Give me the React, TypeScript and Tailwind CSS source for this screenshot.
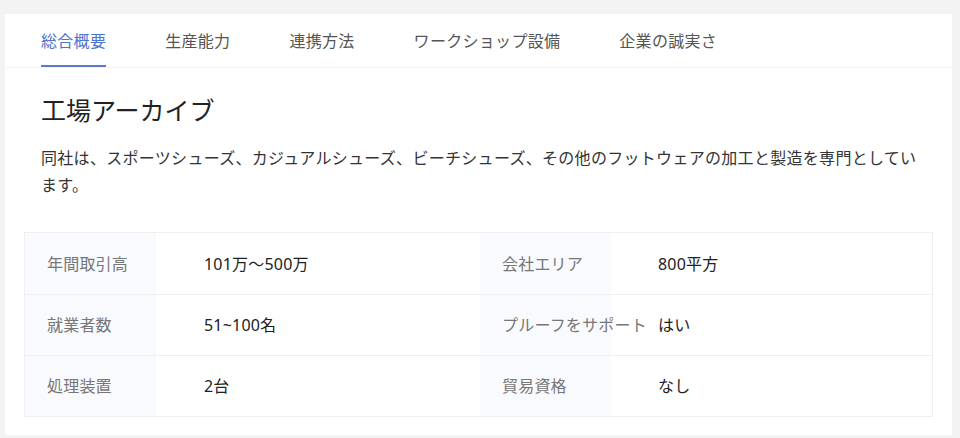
const tabs = ["総合概要", "生産能力", "連携方法", "ワークショップ設備", "企業の誠実さ"];

const rows = [
  ["年間取引高", "101万～500万", "会社エリア", "800平方"],
  ["就業者数", "51~100名", "プルーフをサポート", "はい"],
  ["処理装置", "2台", "貿易資格", "なし"],
];

export default function App() {
  return (
    <div className="min-h-[438px] bg-[#f3f3f3] pl-[5px] pr-[8px] pt-[14px] font-['Noto_Sans','Noto_Sans_CJK_JP',sans-serif]">
      <div className="h-[421px] bg-white">
        <nav className="flex h-[54px] gap-[59px] border-b border-[#f2f2f2] pl-[36px]">
          {tabs.map((t, i) => (
            <div
              key={t}
              className={
                i === 0
                  ? "flex items-center border-b-2 border-[#5b7cc4] pt-[2px] text-[16px] tracking-[0.3px] text-[#4c73cf]"
                  : "flex items-center border-b-2 border-transparent pt-[2px] text-[16px] tracking-[0.3px] text-[#555]"
              }
            >
              {t}
            </div>
          ))}
        </nav>
        <div className="px-[19px]">
          <h2 className="pl-[17px] pt-[25px] text-[25px] leading-[34px] text-[#222]">
            工場アーカイブ
          </h2>
          <p className="mt-[18px] pl-[17px] pr-[8px] text-[16px] leading-[27px] tracking-[0.3px] text-[#333]">
            同社は、スポーツシューズ、カジュアルシューズ、ビーチシューズ、その他のフットウェアの加工と製造を専門としています。
          </p>
          <div className="mt-[33px] border border-[#efefef]">
            {rows.map((r, i) => (
              <div
                key={r[0]}
                className={
                  i === 0
                    ? "grid h-[61px] grid-cols-[131px_324px_131px_1fr] text-[16px] tracking-[0.2px]"
                    : "grid h-[61px] grid-cols-[131px_324px_131px_1fr] border-t border-[#efefef] text-[16px] tracking-[0.2px]"
                }
              >
                <div className="flex items-center whitespace-nowrap bg-[#f8fafd] pl-[22px] text-[#777]">{r[0]}</div>
                <div className="flex items-center pl-[48px] text-[#222]">{r[1]}</div>
                <div className="relative z-10 flex items-center whitespace-nowrap bg-[#f8fafd] pl-[22px] text-[#777]">{r[2]}</div>
                <div className="flex items-center pl-[47px] text-[#222]">{r[3]}</div>
              </div>
            ))}
          </div>
        </div>
      </div>
    </div>
  );
}
